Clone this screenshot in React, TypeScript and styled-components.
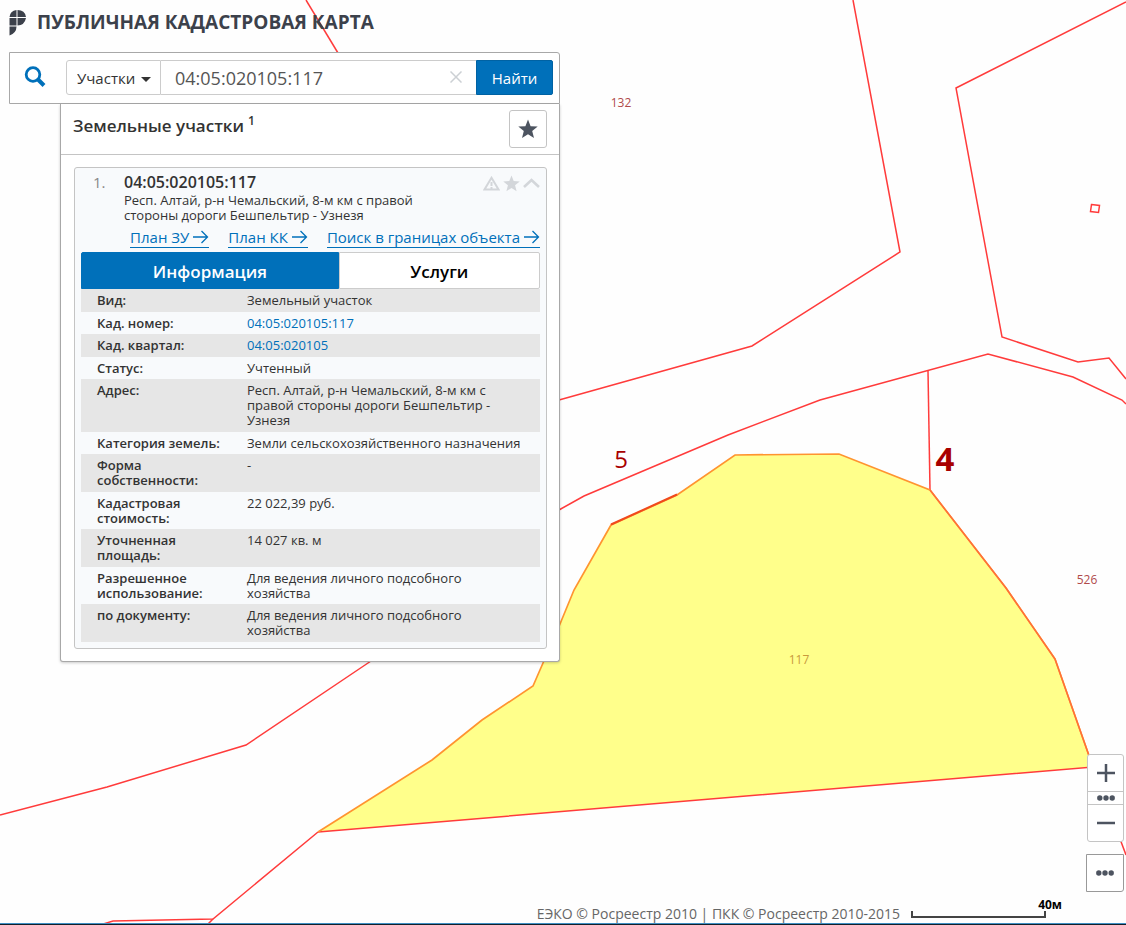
import React from "react";
import styled, { createGlobalStyle } from "styled-components";

const GlobalStyle = createGlobalStyle`
  *, *::before, *::after { box-sizing: border-box; }
  body {
    margin: 0;
    background: #fefefe;
    color: #333;
    font-family: "Open Sans", "Noto Sans", sans-serif;
  }
  button, input, select { font-family: inherit; margin: 0; }
`;

const Page = styled.div`
  position: relative;
  min-height: 100vh;
  display: flex;
  flex-direction: column;
  overflow: hidden;
  border-bottom: 1px solid #10202b;
`;

const MapCanvas = styled.svg`
  position: absolute;
  inset: 0;
  width: 100%;
  height: 100%;
`;

const MapLabel = styled.text<{ $size: number; $tone?: string; $bold?: boolean }>`
  font-size: ${(p) => p.$size}px;
  font-weight: ${(p) => (p.$bold ? 700 : 400)};
  fill: ${(p) => p.$tone ?? "#b04a4a"};
  text-anchor: middle;
`;

const Header = styled.header`
  position: relative;
  display: flex;
  align-items: center;
  gap: 10px;
  height: 52px;
  padding: 0 8px 8px;
`;

const Title = styled.h1`
  margin: 0;
  font-size: 19px;
  line-height: 24px;
  font-weight: 700;
  color: #3c414b;
`;

const Workspace = styled.main`
  position: relative;
  flex: 1;
  display: flex;
  justify-content: space-between;
  padding: 0 2px 0 9px;
`;

const Sidebar = styled.section`
  flex: 0 1 551px;
  min-width: 0;
`;

const SearchBar = styled.form`
  display: flex;
  align-items: center;
  height: 52px;
  padding: 0 6px 2px 14px;
  background: #fff;
  border: 1px solid #a8a8a8;
  border-radius: 0 3px 0 0;
`;

const SearchMark = styled.span`
  display: flex;
  width: 42px;
`;

const TypePicker = styled.label`
  position: relative;
  display: block;
  width: 95px;
`;

const TypeSelect = styled.select`
  display: block;
  width: 100%;
  height: 35px;
  padding: 2px 20px 0 10px;
  appearance: none;
  font-size: 15px;
  color: #333;
  background: #fff;
  border: 1px solid #ccc;
  border-radius: 3px 0 0 3px;
`;

const Caret = styled.svg`
  position: absolute;
  right: 10px;
  top: 17px;
  pointer-events: none;
`;

const QueryBox = styled.div`
  flex: 1;
  min-width: 0;
  display: flex;
  align-items: center;
  height: 35px;
  padding: 0 14px;
  background: #fff;
  border: 1px solid #ccc;
  border-width: 1px 0;
`;

const QueryInput = styled.input`
  flex: 1;
  min-width: 0;
  padding: 2px 0 0;
  border: 0;
  outline: 0;
  background: none;
  font-size: 18px;
  line-height: 24px;
  color: #555;
`;

const IconButton = styled.button<{ $box?: number }>`
  display: flex;
  align-items: center;
  justify-content: center;
  flex: none;
  width: ${(p) => (p.$box ? `${p.$box}px` : "auto")};
  height: ${(p) => (p.$box ? `${p.$box}px` : "auto")};
  padding: 0;
  background: ${(p) => (p.$box ? "#fff" : "none")};
  border: ${(p) => (p.$box ? "1px solid #c4c4c4" : "0")};
  border-radius: 3px;
  color: #4d5460;
  cursor: pointer;
`;

const MoreButton = styled(IconButton)`
  border-color: #999;
  border-radius: 0 0 3px 0;
`;

const SubmitButton = styled.button`
  width: 77px;
  height: 35px;
  padding: 2px 0 0;
  font-size: 15px;
  color: #fff;
  background: #0070ba;
  border: 1px solid #0062a3;
  border-radius: 0 2px 2px 0;
  cursor: pointer;
`;

const Results = styled.div`
  margin-left: 51px;
  background: #fff;
  border: 1px solid #a8a8a8;
  border-top: 0;
  border-radius: 0 0 3px 3px;
  box-shadow: 0 1px 3px rgba(0, 0, 0, 0.2);
`;

const ResultsHead = styled.div`
  display: flex;
  justify-content: space-between;
  align-items: flex-start;
  height: 51px;
  padding: 6px 12px;
  border-bottom: 1px solid #c4c4c4;
`;

const ResultsTitle = styled.h2`
  margin: 0;
  padding-top: 4px;
  font-size: 17px;
  line-height: 24px;
  font-weight: 600;

  sup { font-size: 12px; line-height: 12px; margin-left: 4px; }
`;

const Card = styled.article`
  margin: 12px;
  margin-left: 13px;
  padding: 4px 6px 6px;
  background: #f8fafc;
  border: 1px solid #c4c4c4;
  border-radius: 3px;
`;

const CardHead = styled.div`
  display: grid;
  grid-template-columns: 31px 1fr auto;
  padding-left: 12px;
`;

const Index = styled.span`
  font-size: 15px;
  line-height: 21px;
  color: #888;
`;

const ParcelName = styled.h3`
  margin: 0;
  font-size: 16px;
  line-height: 21px;
  font-weight: 600;
`;

const ParcelAddress = styled.p`
  margin: 0;
  max-width: 310px;
  font-size: 13px;
  line-height: 15px;
`;

const CardTools = styled.div`
  display: flex;
  gap: 3px;
  padding-top: 2px;
`;

const Links = styled.nav`
  display: flex;
  justify-content: flex-end;
  gap: 19px;
  padding: 4px 0;
`;

const PlanLink = styled.a`
  display: flex;
  align-items: center;
  gap: 4px;
  height: 21px;
  font-size: 15px;
  line-height: 20px;
  color: #0070ba;
  text-decoration: none;
  border-bottom: 1px solid #0070ba;
`;

const Tabs = styled.div`
  display: flex;
`;

const Tab = styled.button<{ $active?: boolean }>`
  flex: ${(p) => (p.$active ? "258 1 0" : "201 1 0")};
  height: 37px;
  padding: 2px 0 0;
  font-size: 17px;
  font-weight: 600;
  color: ${(p) => (p.$active ? "#fff" : "#000")};
  background: ${(p) => (p.$active ? "#0070ba" : "#fff")};
  border: 1px solid ${(p) => (p.$active ? "#0070ba" : "#ccc")};
  border-radius: ${(p) => (p.$active ? "2px 0 0 0" : "0 2px 2px 0")};
  cursor: pointer;
`;

const Details = styled.table`
  width: 100%;
  table-layout: fixed;
  border-collapse: collapse;
  font-size: 13px;
  line-height: 15px;

  tr:nth-child(odd) { background: #e6e6e6; }
  th, td { padding: 4px 16px 3px 0; text-align: left; vertical-align: top; }
  tr:nth-child(odd) > * { padding-bottom: 4px; }
  th { width: 166px; padding-left: 16px; font-weight: 600; }
  a { color: #0070ba; text-decoration: none; }
`;

const MapControls = styled.aside`
  align-self: flex-end;
  display: flex;
  flex-direction: column;
  align-items: flex-end;
  gap: 12px;
  padding-bottom: 8px;
`;

const ZoomGroup = styled.div`
  display: flex;
  flex-direction: column;
  width: 37px;
  background: #fff;
  border: 1px solid #c4c4c4;
  border-radius: 3px;
`;

const ZoomButton = styled.button<{ $slim?: boolean }>`
  display: flex;
  align-items: center;
  justify-content: center;
  height: ${(p) => (p.$slim ? 13 : 37)}px;
  padding: 0;
  background: none;
  border: 0;
  border-bottom: 1px solid #c4c4c4;
  color: #4d5460;
  cursor: pointer;

  &:last-child { border-bottom: 0; height: 36px; }
`;

const Footer = styled.footer`
  position: relative;
  display: flex;
  justify-content: flex-end;
  gap: 11px;
  height: 24px;
  padding-right: 80px;
  border-bottom: 1px solid #3f8fc4;
  font-size: 14px;
  line-height: 28px;
  color: #666;
`;

const Scale = styled.div`
  position: relative;
  width: 135px;
  height: 7px;
  margin-top: 11px;
  border: 2px solid #444;
  border-top: 0;
`;

const ScaleText = styled.span`
  position: absolute;
  right: -18px;
  top: -14px;
  font-size: 12px;
  line-height: 16px;
  font-weight: 700;
  color: #000;
`;

const STAR = "M10 0.5 12.6 7.2 19.7 7.6 14.2 12.1 16 19 10 15.2 4 19 5.8 12.1 0.3 7.6 7.4 7.2Z";

const ROADS = [
  "306,0 338,53",
  "853,0 900,252 752,346 559,400",
  "1126,2 956,88 1002,337 1078,362 1109,358 1126,379",
  "559,510 584,496 728,435 820,400 988,354 1073,377 1122,400 1126,404",
  "928,371 930,490",
  "0,815 107,787 246,745 371,661",
  "318,832 1093,767 1126,855",
  "318,832 213,919 113,921 100,925",
  "213,919 207,925",
];

const PARCEL =
  "318,832 432,760 482,720 533,686 560,624 574,590 611,525 677,495 735,455 839,454 930,490 1006,588 1055,659 1093,767";

type Row = { label: string; value: string; link?: boolean };

const ROWS: Row[] = [
  { label: "Вид:", value: "Земельный участок" },
  { label: "Кад. номер:", value: "04:05:020105:117", link: true },
  { label: "Кад. квартал:", value: "04:05:020105", link: true },
  { label: "Статус:", value: "Учтенный" },
  { label: "Адрес:", value: "Респ. Алтай, р-н Чемальский, 8-м км с правой стороны дороги Бешпельтир - Узнезя" },
  { label: "Категория земель:", value: "Земли сельскохозяйственного назначения" },
  { label: "Форма собственности:", value: "-" },
  { label: "Кадастровая стоимость:", value: "22 022,39 руб." },
  { label: "Уточненная площадь:", value: "14 027 кв. м" },
  { label: "Разрешенное использование:", value: "Для ведения личного подсобного хозяйства" },
  { label: "по документу:", value: "Для ведения личного подсобного хозяйства" },
];

const Arrow = () => (
  <svg width="16" height="14" viewBox="0 0 16 14" fill="none" stroke="currentColor" strokeWidth="1.3" aria-hidden="true">
    <path d="M0 7H14.5M8.5 1 14.5 7 8.5 13" />
  </svg>
);

const Dots = () => (
  <svg width="18" height="6" viewBox="0 0 18 6" fill="currentColor" aria-hidden="true">
    <circle cx="2.8" cy="3" r="2.7" />
    <circle cx="9" cy="3" r="2.7" />
    <circle cx="15.2" cy="3" r="2.7" />
  </svg>
);

const Star = ({ size }: { size: number }) => (
  <svg width={size} height={size} viewBox="0 0 20 20" fill="currentColor" aria-hidden="true">
    <path d={STAR} />
  </svg>
);

const PaleTool = styled(IconButton)`
  width: 17px;
  height: 18px;
  color: #d3d6da;
`;

function CadastralMap() {
  return (
    <MapCanvas viewBox="0 0 1126 925" preserveAspectRatio="xMinYMin slice" aria-label="Карта">
      <polygon points={PARCEL} fill="#ffff8b" />
      {ROADS.map((points) => (
        <polyline key={points} points={points} fill="none" stroke="#ff3b3b" strokeWidth="1.5" />
      ))}
      <polyline points={PARCEL} fill="none" stroke="#ff9430" strokeWidth="1.7" />
      <path d="M611 524.5 677 494.5" stroke="#f04a1c" strokeWidth="2" />
      <path d="M930 490 1006 588 1055 659 1093 767" stroke="#ff7038" strokeWidth="1.5" fill="none" />
      <path d="M1091.5 204.5 1099.5 205.5 1098.5 212.5 1090.5 211.5Z" stroke="#ff3b3b" strokeWidth="1.5" fill="none" />
      <MapLabel x="621" y="107" $size={12}>132</MapLabel>
      <MapLabel x="1087" y="584" $size={12}>526</MapLabel>
      <MapLabel x="799" y="664" $size={12} $tone="#c99a3c">117</MapLabel>
      <MapLabel x="621" y="468" $size={24} $tone="#a80000">5</MapLabel>
      <MapLabel x="945" y="471" $size={33} $tone="#a80000" $bold>4</MapLabel>
    </MapCanvas>
  );
}

export default function App() {
  return (
    <Page>
      <GlobalStyle />
      <CadastralMap />
      <Header>
        <svg width="19" height="27" viewBox="0 0 19 27" fill="#3c414b" aria-hidden="true">
          <path d="M8.5 1V8H1.5Q2 2 8.5 1ZM9.5 1Q17 1 18 8H9.5ZM1.500 9H8.5V16.5H1.5ZM9.5 9H18Q16.5 16.5 9.5 16.5ZM1.5 17.5H8.5Q8.5 24 1.5 26.5Z" />
        </svg>
        <Title>ПУБЛИЧНАЯ КАДАСТРОВАЯ КАРТА</Title>
      </Header>
      <Workspace>
        <Sidebar>
          <SearchBar onSubmit={(e) => e.preventDefault()}>
            <SearchMark>
              <svg width="22" height="22" viewBox="0 0 22 22" fill="none" stroke="#0070ba" aria-hidden="true">
                <circle cx="9" cy="8.5" r="6.8" strokeWidth="2.8" />
                <path d="M14 13.500 20 19.5" strokeWidth="4" />
              </svg>
            </SearchMark>
            <TypePicker>
              <TypeSelect aria-label="Тип объекта" defaultValue="parcels">
                <option value="parcels">Участки</option>
              </TypeSelect>
              <Caret width="10" height="5" viewBox="0 0 10 5" fill="#333" aria-hidden="true">
                <path d="M0 0H10L5 5Z" />
              </Caret>
            </TypePicker>
            <QueryBox>
              <QueryInput type="text" aria-label="Кадастровый номер" defaultValue="04:05:020105:117" />
              <IconButton type="button" aria-label="Очистить">
                <svg width="12" height="12" viewBox="0 0 12 12" stroke="#ccd0d4" strokeWidth="1.5" aria-hidden="true">
                  <path d="M0.5 0.5 11.5 11.5M11.5 0.5 0.5 11.5" />
                </svg>
              </IconButton>
            </QueryBox>
            <SubmitButton type="submit">Найти</SubmitButton>
          </SearchBar>

          <Results>
            <ResultsHead>
              <ResultsTitle>
                Земельные участки<sup>1</sup>
              </ResultsTitle>
              <IconButton type="button" $box={38} aria-label="Избранное">
                <Star size={20} />
              </IconButton>
            </ResultsHead>

            <Card>
              <CardHead>
                <Index>1.</Index>
                <div>
                  <ParcelName>04:05:020105:117</ParcelName>
                  <ParcelAddress>
                    Респ. Алтай, р-н Чемальский, 8-м км с правой стороны дороги Бешпельтир - Узнезя
                  </ParcelAddress>
                </div>
                <CardTools>
                  <PaleTool type="button" aria-label="Сообщить об ошибке">
                    <svg width="17" height="15" viewBox="0 0 17 15" fill="none" stroke="currentColor" strokeWidth="2" aria-hidden="true">
                      <path d="M8.5 1.8 15.5 13.5H1.5ZM8.5 6V10M8.5 11V12.5" />
                    </svg>
                  </PaleTool>
                  <PaleTool type="button" aria-label="В избранное">
                    <Star size={17} />
                  </PaleTool>
                  <PaleTool type="button" aria-label="Свернуть">
                    <svg width="17" height="10" viewBox="0 0 17 10" fill="none" stroke="currentColor" strokeWidth="2.6" aria-hidden="true">
                      <path d="M1 9 8.5 2 16 9" />
                    </svg>
                  </PaleTool>
                </CardTools>
              </CardHead>

              <Links>
                <PlanLink href="#plan-zu">План ЗУ <Arrow /></PlanLink>
                <PlanLink href="#plan-kk">План КК <Arrow /></PlanLink>
                <PlanLink href="#search">Поиск в границах объекта <Arrow /></PlanLink>
              </Links>

              <Tabs role="tablist">
                <Tab type="button" role="tab" aria-selected="true" $active>Информация</Tab>
                <Tab type="button" role="tab" aria-selected="false">Услуги</Tab>
              </Tabs>

              <Details>
                <tbody>
                  {ROWS.map((row) => (
                    <tr key={row.label}>
                      <th scope="row">{row.label}</th>
                      <td>{row.link ? <a href={`#${row.value}`}>{row.value}</a> : row.value}</td>
                    </tr>
                  ))}
                </tbody>
              </Details>
            </Card>
          </Results>
        </Sidebar>

        <MapControls>
          <ZoomGroup>
            <ZoomButton type="button" aria-label="Приблизить">
              <svg width="18" height="18" viewBox="0 0 18 18" stroke="currentColor" strokeWidth="2.5" aria-hidden="true">
                <path d="M0 9H18M9 0V18" />
              </svg>
            </ZoomButton>
            <ZoomButton type="button" $slim aria-label="Масштаб">
              <Dots />
            </ZoomButton>
            <ZoomButton type="button" aria-label="Отдалить">
              <svg width="18" height="18" viewBox="0 0 18 18" stroke="currentColor" strokeWidth="2.5" aria-hidden="true">
                <path d="M0 9H18" />
              </svg>
            </ZoomButton>
          </ZoomGroup>
          <MoreButton type="button" $box={38} aria-label="Ещё">
            <Dots />
          </MoreButton>
        </MapControls>
      </Workspace>

      <Footer>
        <span>ЕЭКО © Росреестр 2010 | ПКК © Росреестр 2010-2015</span>
        <Scale>
          <ScaleText>40м</ScaleText>
        </Scale>
      </Footer>
    </Page>
  );
}
